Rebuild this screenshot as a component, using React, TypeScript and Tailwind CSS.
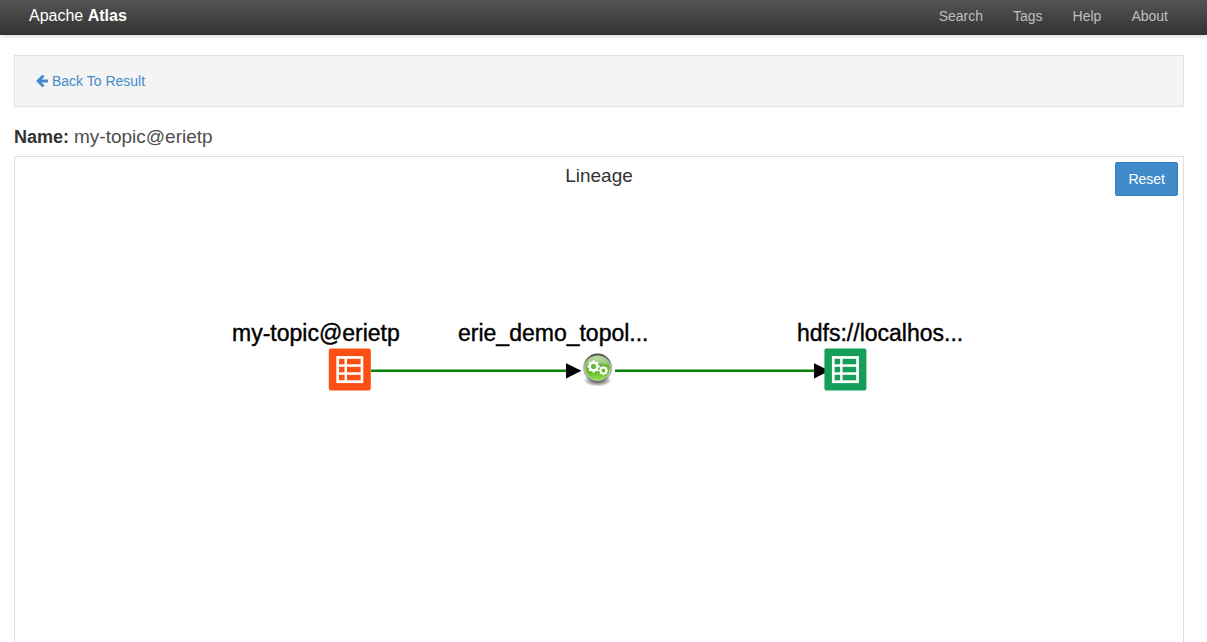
import React from "react";

const navItems = ["Search", "Tags", "Help", "About"];

function ArrowLeftIcon() {
  return (
    <svg viewBox="0 192 1536 1536" fill="currentColor" aria-hidden="true" className="size-3">
      <path d="M1536 896v128q0 53-32.5 90.5t-84.5 37.5h-704l293 294q38 36 38 90t-38 90l-75 76q-37 37-90 37-52 0-91-37l-651-652q-37-37-37-90 0-52 37-91l651-650q38-38 91-38 52 0 90 38l75 74q38 38 38 91t-38 91l-293 293h704q52 0 84.5 37.5t32.5 90.5z" />
    </svg>
  );
}

function TableIcon({ x, y, color }: { x: number; y: number; color: string }) {
  return (
    <g transform={`translate(${x} ${y})`}>
      <rect width="42" height="42" rx="2" fill={color} />
      <rect x="7.5" y="7.5" width="27" height="27" fill="#fff" />
      {[10.2, 18.2, 26.2].map((row) => (
        <g key={row} fill={color}>
          <rect x="10.2" y={row} width="5.5" height="5.5" />
          <rect x="18.2" y={row} width="13.6" height="5.5" />
        </g>
      ))}
    </g>
  );
}

function Gear({ cx, cy, r }: { cx: number; cy: number; r: number }) {
  const tooth = r * 0.42;
  return (
    <g transform={`translate(${cx} ${cy})`} fill="#fff">
      {[0, 45, 90, 135, 180, 225, 270, 315].map((angle) => (
        <rect
          key={angle}
          x={-tooth / 2}
          y={-r}
          width={tooth}
          height={r * 0.5}
          transform={`rotate(${angle})`}
        />
      ))}
      <circle r={r * 0.62} fill="none" stroke="#fff" strokeWidth={r * 0.36} />
    </g>
  );
}

function ProcessIcon({ cx, cy }: { cx: number; cy: number }) {
  return (
    <g transform={`translate(${cx} ${cy})`}>
      <ellipse cy="12.5" rx="14" ry="6" fill="url(#ballShadow)" />
      <circle r="14.5" fill="url(#ballRim)" />
      <circle r="12.6" fill="#dfe8d6" />
      <circle r="12.2" fill="url(#ballFill)" />
      <path d="M-11 -3 A11.4 11.4 0 0 1 11 -3 Q0 -7 -11 -3Z" fill="#fff" opacity="0.25" />
      <Gear cx={-4} cy={-1.5} r={6} />
      <Gear cx={5.8} cy={2.6} r={4.6} />
    </g>
  );
}

function LineageGraph() {
  return (
    <svg
      width="740"
      height="90"
      viewBox="0 0 740 90"
      role="img"
      aria-label="Lineage graph"
      className="mx-auto mt-[120px] block shrink-0 overflow-visible"
    >
      <defs>
        <linearGradient id="ballRim" x1="0" y1="0" x2="0" y2="1">
          <stop offset="0" stopColor="#3f4540" />
          <stop offset="0.4" stopColor="#a5aaa5" />
          <stop offset="0.75" stopColor="#b4b8b4" />
          <stop offset="1" stopColor="#5f655f" />
        </linearGradient>
        <linearGradient id="ballFill" x1="0" y1="0" x2="0" y2="1">
          <stop offset="0" stopColor="#a9cf90" />
          <stop offset="0.4" stopColor="#6cb53c" />
          <stop offset="0.7" stopColor="#65bd2c" />
          <stop offset="1" stopColor="#98e058" />
        </linearGradient>
        <radialGradient id="ballShadow">
          <stop offset="0" stopColor="#000" stopOpacity="0.7" />
          <stop offset="0.6" stopColor="#000" stopOpacity="0.35" />
          <stop offset="1" stopColor="#000" stopOpacity="0" />
        </radialGradient>
      </defs>
      <g stroke="#078007" strokeWidth="2.6">
        <path d="M142 54.8H340" />
        <path d="M386 54.8H588" />
      </g>
      <path d="M337 47.2L352.5 54.8L337 62.4Z" />
      <path d="M585 47.2L600.5 54.8L585 62.4Z" />
      <TableIcon x={99.8} y={32.6} color="#fb4f14" />
      <ProcessIcon cx={368.6} cy={52} />
      <TableIcon x={595.4} y={32.6} color="#149e5a" />
      <g fontSize="23" fill="#000" stroke="#000" strokeWidth="0.4">
        <text x="3" y="25">my-topic@erietp</text>
        <text x="229" y="25">erie_demo_topol...</text>
        <text x="568" y="25">hdfs://localhos...</text>
      </g>
    </svg>
  );
}

export default function App() {
  return (
    <div className="flex min-h-screen flex-col bg-white font-['Liberation_Sans',Arial,sans-serif] text-sm text-[#333]">
      <header className="flex h-[35px] items-start justify-between bg-linear-to-b from-[#545454] to-[#333] pt-[6px] pr-[39px] pl-[29px] leading-5 shadow-[0_1px_5px_rgba(0,0,0,0.2)]">
        <a href="#" className="text-base leading-5 text-white">
          Apache <strong>Atlas</strong>
        </a>
        <nav className="flex gap-[30px]">
          {navItems.map((item) => (
            <a key={item} href="#" className="text-[#bfbfbf]">
              {item}
            </a>
          ))}
        </nav>
      </header>

      <main className="flex flex-1 flex-col pt-5 pr-[23px] pl-[14px]">
        <div className="flex h-[52px] items-center border border-[#e3e3e3] bg-[#f4f4f4] px-[21px]">
          <a href="#" className="flex items-center gap-1 text-[#428bca]">
            <ArrowLeftIcon />
            Back To Result
          </a>
        </div>

        <h1 className="mt-[18px] mb-[7px] text-[18px] leading-6 font-bold">
          Name: <span className="text-[19px] font-normal text-[#4d4d4d]">my-topic@erietp</span>
        </h1>

        <section className="flex flex-1 flex-col border-x border-t border-[#ddd]">
          <div className="grid grid-cols-[1fr_auto_1fr] items-start p-[5px] pb-0">
            <h2 className="col-start-2 pt-[2px] text-[19px] leading-6">Lineage</h2>
            <button
              type="button"
              className="h-[34px] justify-self-end rounded-[2px] border border-[#357ebd] bg-[#428bca] px-3 text-white"
            >
              Reset
            </button>
          </div>
          <LineageGraph />
        </section>
      </main>
    </div>
  );
}
